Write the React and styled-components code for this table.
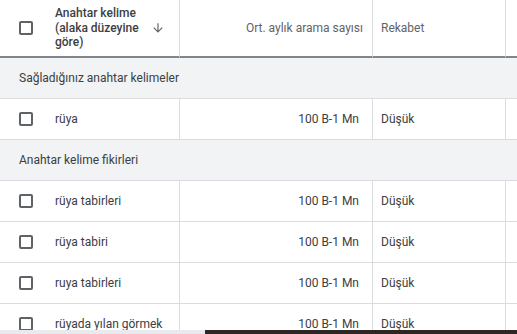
import React from 'react';
import styled, { createGlobalStyle } from 'styled-components';

const GlobalStyle = createGlobalStyle`
  html, body {
    margin: 0;
    padding: 0;
    background: #fff;
  }
  body {
    font-family: Roboto, "Liberation Sans", Arial, sans-serif;
    color: #3c4043;
  }
`;

const Page = styled.div`
  width: 517px;
  height: 334px;
  display: flex;
  flex-direction: column;
  overflow: hidden;
`;

const Table = styled.div`
  flex: 1;
  overflow: hidden;
  display: grid;
  grid-template-columns: 180px 193px 133px 1fr;
  grid-template-rows: 58px;
  grid-auto-rows: 41px;
  align-content: start;
`;

const HeadCell = styled.div`
  box-sizing: border-box;
  border-bottom: 2px solid #80868b;
  border-right: ${p => (p.$last ? 'none' : '1px solid #dadce0')};
  display: flex;
  align-items: center;
  justify-content: ${p => (p.$right ? 'flex-end' : 'flex-start')};
  padding: ${p => (p.$right ? '0 9px 0 0' : p.$first ? '0 0 0 19px' : '0 0 0 8px')};
  font-size: 12px;
  color: #5f6368;
`;

const HeadTitle = styled.div`
  margin-left: 22px;
  font-weight: 500;
  color: #3c4043;
  line-height: 14.5px;
  width: 92px;
`;

const SortIcon = styled.svg`
  width: 14px;
  height: 14px;
  margin-left: 4px;
  fill: #5f6368;
`;

const Section = styled.div`
  grid-column: 1 / -1;
  background: #f1f3f4;
  border-bottom: 1px solid #dadce0;
  display: flex;
  align-items: center;
  padding-left: 19px;
  font-size: 12px;
  color: #3c4043;
`;

const Cell = styled.div`
  border-bottom: 1px solid #dadce0;
  border-right: ${p => (p.$last ? 'none' : '1px solid #dadce0')};
  display: flex;
  align-items: center;
  justify-content: ${p => (p.$right ? 'flex-end' : 'flex-start')};
  padding: ${p => (p.$right ? '0 13px 0 0' : p.$first ? '0 0 0 19px' : '0 0 0 8px')};
  font-size: 12px;
  color: #3c4043;
  white-space: nowrap;
`;

const Check = styled.span`
  width: 14px;
  height: 14px;
  box-sizing: border-box;
  border: 2px solid #5f6368;
  border-radius: 2px;
  flex-shrink: 0;
`;

const Keyword = styled.span`
  margin-left: 22px;
`;

const Footer = styled.div`
  height: 4px;
  display: flex;
  flex-shrink: 0;
`;

const FooterPart = styled.div`
  width: ${p => p.$width || 'auto'};
  flex: ${p => (p.$width ? 'none' : 1)};
  background: ${p => p.$color};
`;

const sections = [
  { title: 'Sağladığınız anahtar kelimeler', rows: ['rüya'] },
  {
    title: 'Anahtar kelime fikirleri',
    rows: ['rüya tabirleri', 'rüya tabiri', 'ruya tabirleri', 'rüyada yılan görmek'],
  },
];

function Row({ keyword }) {
  return (
    <>
      <Cell $first>
        <Check />
        <Keyword>{keyword}</Keyword>
      </Cell>
      <Cell $right>100 B-1 Mn</Cell>
      <Cell>Düşük</Cell>
      <Cell $last />
    </>
  );
}

export default function App() {
  return (
    <Page>
      <GlobalStyle />
      <Table>
        <HeadCell $first>
          <Check />
          <HeadTitle>Anahtar kelime (alaka düzeyine göre)</HeadTitle>
          <SortIcon viewBox="0 0 24 24">
            <path d="M20 12l-1.41-1.41L13 16.17V4h-2v12.17l-5.58-5.59L4 12l8 8 8-8z" />
          </SortIcon>
        </HeadCell>
        <HeadCell $right>Ort. aylık arama sayısı</HeadCell>
        <HeadCell>Rekabet</HeadCell>
        <HeadCell $last />
        {sections.map(s => (
          <React.Fragment key={s.title}>
            <Section>{s.title}</Section>
            {s.rows.map((r, i) => (
              <Row key={i} keyword={r} />
            ))}
          </React.Fragment>
        ))}
      </Table>
      <Footer>
        <FooterPart $width="205px" $color="#e8eaed" />
        <FooterPart $color="#2d2622" />
      </Footer>
    </Page>
  );
}
